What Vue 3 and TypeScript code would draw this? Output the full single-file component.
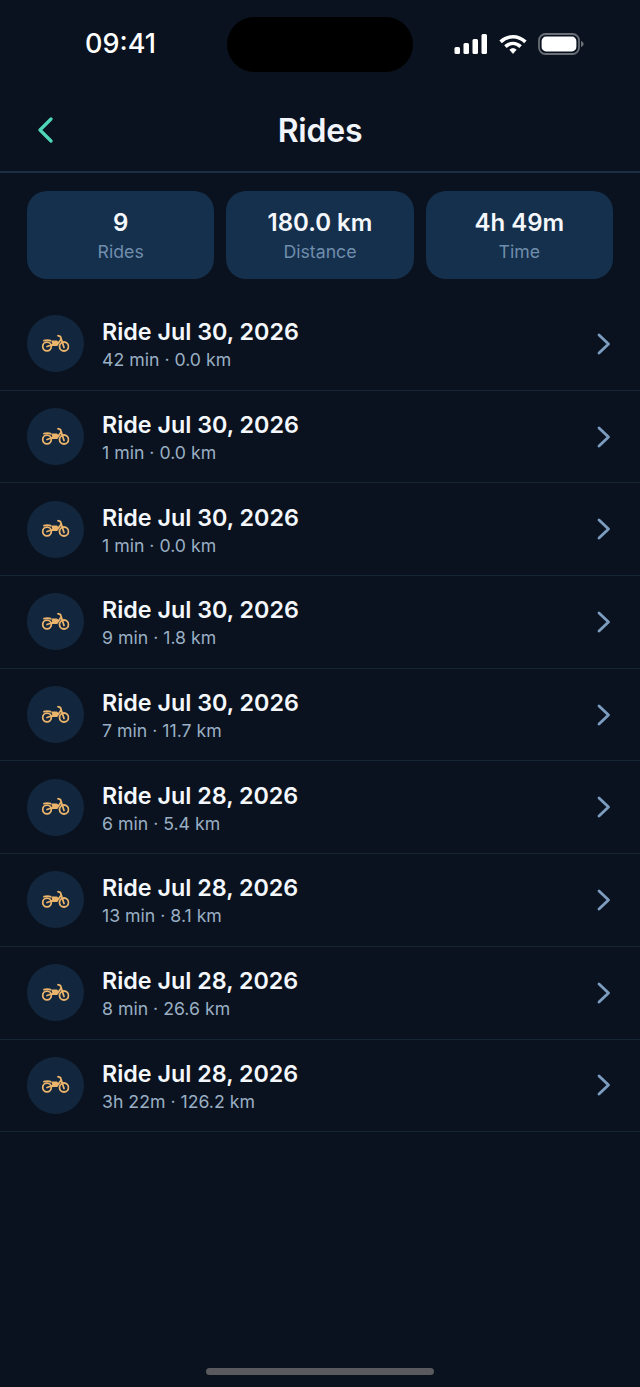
<script setup lang="ts">
interface Ride { title: string; meta: string }
const rides: Ride[] = [
  { title: 'Ride Jul 30, 2026', meta: '42 min · 0.0 km' },
  { title: 'Ride Jul 30, 2026', meta: '1 min · 0.0 km' },
  { title: 'Ride Jul 30, 2026', meta: '1 min · 0.0 km' },
  { title: 'Ride Jul 30, 2026', meta: '9 min · 1.8 km' },
  { title: 'Ride Jul 30, 2026', meta: '7 min · 11.7 km' },
  { title: 'Ride Jul 28, 2026', meta: '6 min · 5.4 km' },
  { title: 'Ride Jul 28, 2026', meta: '13 min · 8.1 km' },
  { title: 'Ride Jul 28, 2026', meta: '8 min · 26.6 km' },
  { title: 'Ride Jul 28, 2026', meta: '3h 22m · 126.2 km' },
]
const stats = [
  { value: '9', label: 'Rides' },
  { value: '180.0 km', label: 'Distance' },
  { value: '4h 49m', label: 'Time' },
]
</script>

<template>
  <div class="screen">
    <div class="status">
      <span class="clock">09:41</span>
      <div class="island"></div>
      <div class="status-icons">
        <svg width="34" height="20" viewBox="0 0 34 20" fill="#fff">
          <rect x="0.5" y="13" width="5.5" height="7" rx="1.5" />
          <rect x="9.5" y="9" width="5.5" height="11" rx="1.5" />
          <rect x="18.5" y="5" width="5.5" height="15" rx="1.5" />
          <rect x="27.5" y="0" width="5.5" height="20" rx="1.5" />
        </svg>
        <svg width="28" height="21" viewBox="0 0 28 21" fill="none" stroke="#fff" stroke-width="3.6">
          <path d="M1.600 7.800C9 1 19 1 26.400 7.800" />
          <path d="M6.400 12.600C11 8.400 17 8.400 21.600 12.600" />
          <path d="M10.800 15.800L14 19.400L17.200 15.800C15 14.200 13 14.200 10.800 15.800Z" fill="#fff" stroke-width="0.8" />
        </svg>
        <svg width="46" height="22" viewBox="0 0 46 22" fill="none">
          <rect x="1" y="1" width="40" height="20" rx="6.500" stroke="#6b6f76" stroke-width="1.800" />
          <rect x="3.600" y="3.600" width="34.800" height="14.800" rx="4.400" fill="#fff" />
          <path d="M43 8v6c1.600-.5 2.600-1.600 2.600-3s-1-2.500-2.600-3z" fill="#6b6f76" />
        </svg>
      </div>
    </div>

    <header class="nav">
      <svg class="back" width="18" height="26" viewBox="0 0 18 26" fill="none" stroke="#4fd8b8" stroke-width="3.200" stroke-linecap="round" stroke-linejoin="round">
        <path d="M14 2L3 13l11 11" />
      </svg>
      <h1>Rides</h1>
    </header>

    <section class="stats">
      <div v-for="s in stats" :key="s.label" class="stat">
        <div class="stat-value">{{ s.value }}</div>
        <div class="stat-label">{{ s.label }}</div>
      </div>
    </section>

    <ul class="list">
      <li v-for="(r, i) in rides" :key="i" class="row">
        <div class="avatar">
          <svg class="bike" width="28" height="18" viewBox="0 0 28 18" fill="none" stroke="#ecb56c" stroke-width="1.800" stroke-linecap="round" stroke-linejoin="round">
            <circle cx="5.500" cy="12" r="4.300" />
            <circle cx="22.500" cy="12" r="4.500" />
            <path d="M5.500 12l4.500-1.500h5.500l3.500-5" />
            <path d="M16.500 1.200l2.500 1 3.500 10.800" />
            <path d="M2.500 6.200c2.500-.8 4.500-.8 6.500 0" />
            <path d="M10.500 6.500h4.500l1.500 1.500-2 1.500h-3z" fill="#ecb56c" stroke-width="1.200" />
          </svg>
        </div>
        <div class="text">
          <div class="title">{{ r.title }}</div>
          <div class="meta">{{ r.meta }}</div>
        </div>
        <svg class="chev" width="16" height="24" viewBox="0 0 16 24" fill="none" stroke="#7d9dc0" stroke-width="2.800" stroke-linecap="round" stroke-linejoin="round">
          <path d="M3 3l9.500 9L3 21" />
        </svg>
      </li>
    </ul>

    <div class="home"></div>
  </div>
</template>

<style>
html, body { margin: 0; background: #09121e; }
</style>

<style scoped>
.screen {
  position: relative;
  width: 640px;
  height: 1387px;
  overflow: hidden;
  background: #09121e;
  font-family: Inter, "Noto Sans", sans-serif;
  color: #f4f7fb;
}
.status {
  height: 88px;
  display: grid;
  grid-template-columns: 227px 186px 227px;
  align-items: start;
}
.clock {
  margin-top: 27px;
  justify-self: center;
  transform: translateX(7px);
  font-size: 27px;
  line-height: 33px;
  font-weight: 500;
  color: #fff;
}
.island {
  margin-top: 17px;
  height: 55px;
  border-radius: 28px;
  background: #000;
}
.status-icons {
  margin-top: 33px;
  margin-left: 41px;
  display: flex;
  align-items: center;
  gap: 11px;
}
.nav {
  position: relative;
  height: 83px;
  border-bottom: 2px solid #1a2f44;
  display: flex;
  align-items: center;
  justify-content: center;
}
.back { position: absolute; left: 37px; top: 29px; }
h1 {
  margin: 0;
  padding-top: 2px;
  font-size: 32px;
  font-weight: 600;
  letter-spacing: -0.2px;
  color: #f2f5fa;
}
.stats {
  display: grid;
  grid-template-columns: repeat(3, 1fr);
  gap: 12px;
  padding: 18px 27px 19px;
}
.stat {
  box-sizing: border-box;
  height: 88px;
  padding-top: 2px;
  border-radius: 20px;
  background: #15304d;
  display: flex;
  flex-direction: column;
  align-items: center;
  justify-content: center;
}
.stat-value {
  font-size: 24px;
  line-height: 30px;
  font-weight: 600;
  color: #f4f7fb;
}
.stat-label {
  margin-top: 2px;
  font-size: 17.700px;
  line-height: 24px;
  color: #6f8dac;
}
.list { list-style: none; margin: 0; padding: 0; }
.row {
  box-sizing: border-box;
  height: 92.700px;
  padding: 0 28px 0 27px;
  border-bottom: 1px solid #152536;
  display: flex;
  align-items: center;
}
.avatar {
  width: 57px;
  height: 57px;
  border-radius: 50%;
  background: #12263d;
  display: flex;
  align-items: center;
  justify-content: center;
  flex: none;
}
.bike { transform: translate(-0.500px, -0.500px); }
.text { margin-left: 18px; flex: 1; padding-top: 2px; }
.title {
  font-size: 23.300px;
  line-height: 29px;
  font-weight: 600;
  color: #f4f7fb;
}
.meta {
  margin-top: 1px;
  font-size: 17.700px;
  line-height: 25px;
  color: #9aafc4;
}
.chev { flex: none; }
.home {
  position: absolute;
  left: 206px;
  top: 1368px;
  width: 228px;
  height: 7px;
  border-radius: 4px;
  background: #5a5a5e;
}
</style>
